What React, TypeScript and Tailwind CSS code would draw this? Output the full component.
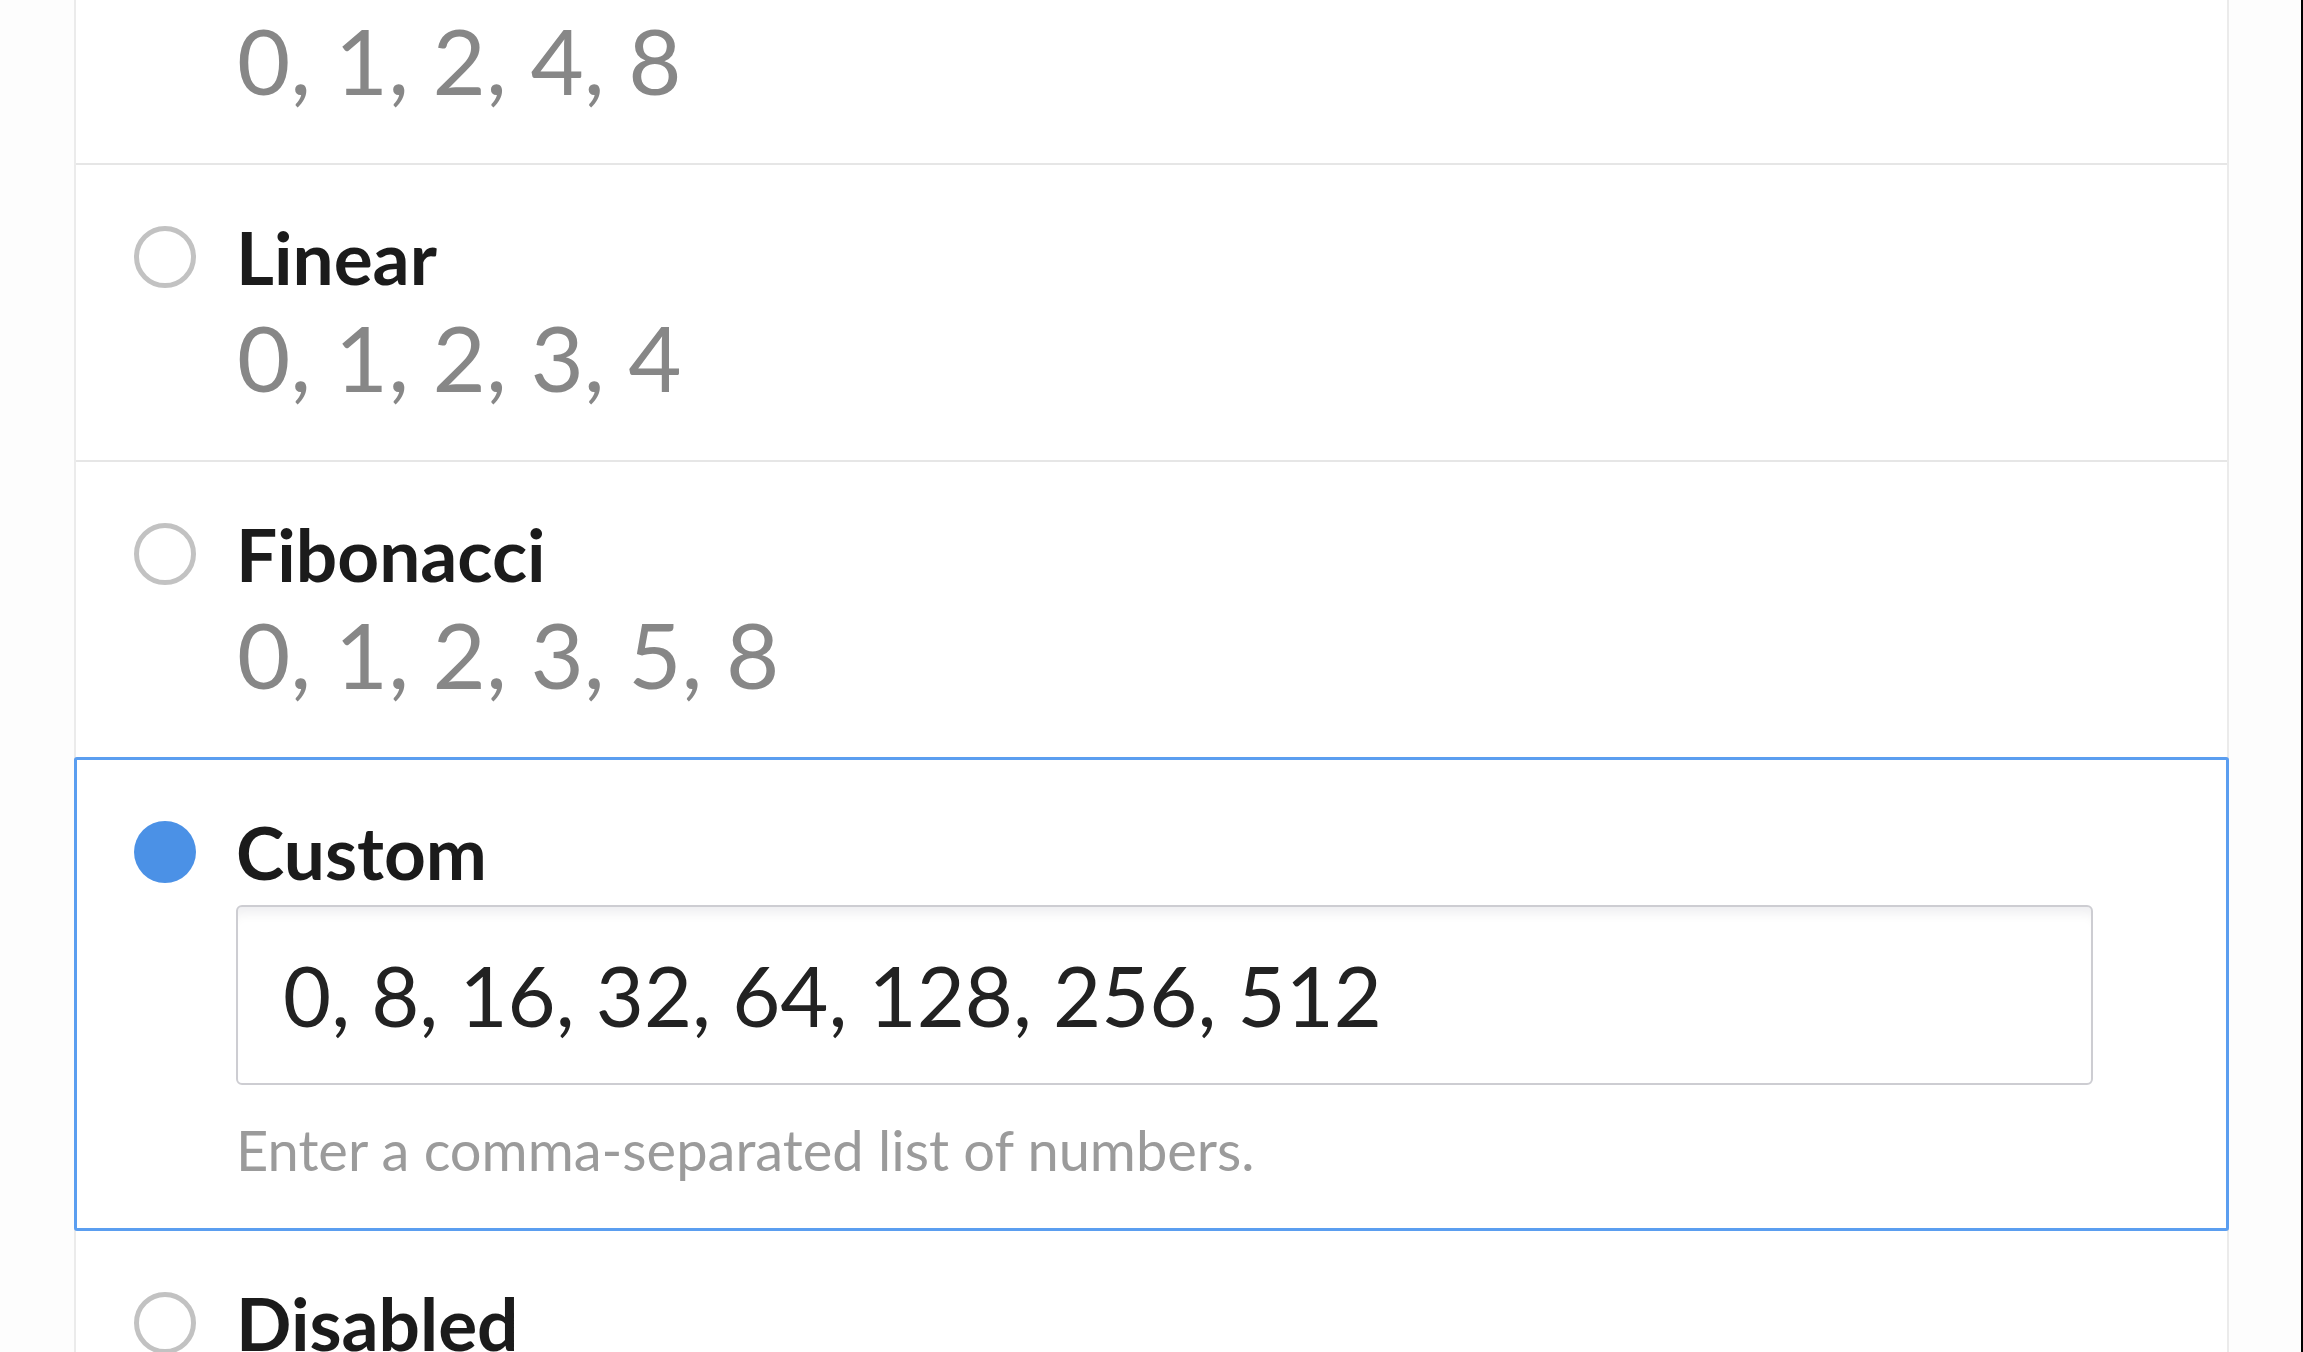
import React from 'react';

type Scale = { id: string; label: string; values: string };

const SCALES: Scale[] = [
  { id: 'powers', label: 'Powers of 2', values: '0, 1, 2, 4, 8' },
  { id: 'linear', label: 'Linear', values: '0, 1, 2, 3, 4' },
  { id: 'fibonacci', label: 'Fibonacci', values: '0, 1, 2, 3, 5, 8' },
];

const Radio: React.FC<{ checked?: boolean }> = ({ checked }) =>
  checked ? (
    <span className="block w-[62px] h-[62px] shrink-0 rounded-full bg-[#4b91e6]" />
  ) : (
    <span className="block w-[62px] h-[62px] shrink-0 rounded-full border-[5px] border-[#c2c2c2] bg-white" />
  );

const OptionRow: React.FC<{ scale: Scale }> = ({ scale }) => (
  <div className="pl-[58px] pr-[134px] pt-[47px] pb-[48px] border-b-2 border-[#e6e6e6]">
    <div className="flex items-center h-[90px]">
      <Radio />
      <span className="ml-[40px] text-[73px] leading-[90px] font-bold text-[#1b1b1b]">{scale.label}</span>
    </div>
    <div className="pl-[103px] text-[92px] leading-[110px] text-[#878787]">{scale.values}</div>
  </div>
);

const App: React.FC = () => {
  return (
    <div className="h-screen w-full overflow-hidden bg-[#fdfdfd] flex [font-family:Lato,sans-serif]">
      {/* Scale list */}
      <div className="ml-[74px] w-[2155px] -mt-[132px] self-start bg-white border-x-2 border-[#ebebeb]">
        {SCALES.map((s) => (
          <OptionRow key={s.id} scale={s} />
        ))}

        {/* Custom (selected) */}
        <div className="-mx-[2px] -mt-[2px] border-[3px] border-[#5b9ef0] rounded-[3px] bg-white pl-[57px] pt-[47px] pb-[43px]">
          <div className="flex items-center h-[90px]">
            <Radio checked />
            <span className="ml-[40px] text-[73px] leading-[90px] font-bold text-[#1b1b1b]">Custom</span>
          </div>
          <div className="ml-[102px] mt-[8px] w-[1857px] h-[180px] flex items-center pl-[45px] border-2 border-[#cdcdd2] rounded-[6px] bg-white shadow-[inset_0_14px_12px_-8px_rgba(0,0,40,0.07)] text-[83px] text-[#222]">
            0, 8, 16, 32, 64, 128, 256, 512
          </div>
          <div className="ml-[102px] mt-[30px] text-[56px] leading-[70px] text-[#9b9b9b]">
            Enter a comma-separated list of numbers.
          </div>
        </div>

        <div className="pl-[58px] pr-[134px] pt-[47px] pb-[48px]">
          <div className="flex items-center h-[90px]">
            <Radio />
            <span className="ml-[40px] text-[73px] leading-[90px] font-bold text-[#1b1b1b]">Disabled</span>
          </div>
        </div>
      </div>
      <div className="flex-1" />
      <div className="w-[2px] h-full bg-black" />
    </div>
  );
};

export default App;
